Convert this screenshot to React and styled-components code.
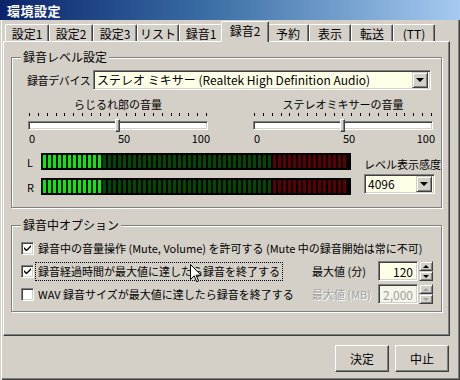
import React from 'react';
import styled, { createGlobalStyle } from 'styled-components';

const FONT = `"Noto Sans CJK JP", "Noto Sans", sans-serif`;

const GlobalStyle = createGlobalStyle`
  html, body {
    margin: 0;
    padding: 0;
    background: #d4d0c8;
  }
  body {
    font-family: ${FONT};
    font-size: 11px;
    color: #000;
  }
  * {
    box-sizing: border-box;
  }
`;

const TABS = [
  ['設定1', 44],
  ['設定2', 44],
  ['設定3', 44],
  ['リスト', 42],
  ['録音1', 44],
  ['録音2', 44, true],
  ['予約', 42],
  ['表示', 42],
  ['転送', 42],
  ['(TT)', 42],
];

const BAR_COUNT = 61;
const barTone = i => (i < 12 ? 'on' : i < 46 ? 'mid' : 'peak');

export default function App() {
  return (
    <>
      <GlobalStyle />
      <Window>
        <TitleBar>環境設定</TitleBar>
        <Body>
          <TabStrip>
            {TABS.map(([label, width, active]) => (
              <Tab key={label} $width={width} $active={active}>
                {label}
              </Tab>
            ))}
          </TabStrip>

          <Panel>
            <Group $height={158} $top={8}>
              <Legend>録音レベル設定</Legend>

              <DeviceRow>
                <DeviceLabel>録音デバイス</DeviceLabel>
                <Combo $width={338}>
                  <ComboText>ステレオ ミキサー (Realtek High Definition Audio)</ComboText>
                  <DropButton>
                    <DownArrow />
                  </DropButton>
                </Combo>
              </DeviceRow>

              <SliderRow>
                <Slider caption="らじるれ郎の音量" value={50} />
                <Slider caption="ステレオミキサーの音量" value={50} />
              </SliderRow>

              <MeterRow>
                <MeterColumn>
                  {['L', 'R'].map(ch => (
                    <MeterLine key={ch}>
                      <Channel>{ch}</Channel>
                      <Meter>
                        {Array.from({ length: BAR_COUNT }).map((_, i) => (
                          <Bar key={i} $tone={barTone(i)} />
                        ))}
                      </Meter>
                    </MeterLine>
                  ))}
                </MeterColumn>
                <SensitivityColumn>
                  <span>レベル表示感度</span>
                  <Combo $width={71}>
                    <ComboText>4096</ComboText>
                    <DropButton>
                      <DownArrow />
                    </DropButton>
                  </Combo>
                </SensitivityColumn>
              </MeterRow>
            </Group>

            <Group $height={94} $top={10}>
              <Legend>録音中オプション</Legend>
              <Options>
                <OptionRow>
                  <CheckBox checked />
                  <OptionText>
                    録音中の音量操作 (Mute, Volume) を許可する (Mute 中の録音開始は常に不可)
                  </OptionText>
                </OptionRow>
                <OptionRow>
                  <CheckBox checked />
                  <OptionText $focused>録音経過時間が最大値に達したら録音を終了する</OptionText>
                  <Limit>
                    <LimitLabel>最大値 (分)</LimitLabel>
                    <SpinField>120</SpinField>
                    <Spinner />
                  </Limit>
                </OptionRow>
                <OptionRow>
                  <CheckBox />
                  <OptionText>WAV 録音サイズが最大値に達したら録音を終了する</OptionText>
                  <Limit>
                    <LimitLabel $disabled>最大値 (MB)</LimitLabel>
                    <SpinField $disabled>2,000</SpinField>
                    <Spinner disabled />
                  </Limit>
                </OptionRow>
              </Options>
            </Group>
          </Panel>

          <ButtonRow>
            <PushButton>決定</PushButton>
            <PushButton>中止</PushButton>
          </ButtonRow>
        </Body>

        <Cursor viewBox="0 0 12 19" width="12" height="19">
          <path
            d="M0.5 0.5 L0.5 15.5 L4.2 11.8 L6.8 17.8 L8.6 17 L6.1 11.2 L11 11.2 Z"
            fill="#fff"
            stroke="#000"
            strokeWidth="1"
          />
        </Cursor>
      </Window>
    </>
  );
}

function Slider({ caption, value }) {
  return (
    <SliderBlock>
      <Caption>{caption}</Caption>
      <Ticks>
        {Array.from({ length: 21 }).map((_, i) => (
          <Tick key={i} />
        ))}
      </Ticks>
      <Track>
        <Thumb $pos={value} />
      </Track>
      <Scale>
        <span>0</span>
        <ScaleHalf>
          <span>50</span>
          <span>100</span>
        </ScaleHalf>
      </Scale>
    </SliderBlock>
  );
}

function CheckBox({ checked }) {
  return (
    <Box>
      {checked && (
        <svg width="7" height="7" viewBox="0 0 7 7">
          <path d="M0 2 L0 4 L2 6 L3 6 L7 2 L7 0 L2.5 4.5 Z" fill="#000" />
        </svg>
      )}
    </Box>
  );
}

function Spinner({ disabled }) {
  return (
    <SpinButtons>
      <SpinHalf>
        <SpinArrow $up $disabled={disabled} />
      </SpinHalf>
      <SpinHalf>
        <SpinArrow $disabled={disabled} />
      </SpinHalf>
    </SpinButtons>
  );
}

const raised = `
  background: #d4d0c8;
  border: 1px solid;
  border-color: #fff #404040 #404040 #fff;
  box-shadow: inset -1px -1px 0 #808080;
`;

const sunken = `
  border: 1px solid;
  border-color: #808080 #fff #fff #808080;
  box-shadow: inset 1px 1px 0 #404040, inset -1px -1px 0 #d4d0c8;
`;

const Window = styled.div`
  position: relative;
  width: 460px;
  height: 380px;
  overflow: hidden;
  background: #d4d0c8;
  display: flex;
  flex-direction: column;
  box-shadow: inset 1px 0 0 #d4d0c8, inset 2px 0 0 #fff, inset -1px -1px 0 #404040,
    inset -2px -2px 0 #808080;
`;

const TitleBar = styled.div`
  flex: none;
  height: 20px;
  padding-left: 7px;
  display: flex;
  align-items: center;
  background: linear-gradient(to right, #0a246a 0%, #3a6ea5 45%, #a6caf0 100%);
  color: #fff;
  font-weight: bold;
  font-size: 13px;
  letter-spacing: 0.5px;
`;

const Body = styled.div`
  padding: 1px 0 0 3px;
  display: flex;
  flex-direction: column;
`;

const TabStrip = styled.div`
  height: 20px;
  padding-left: 2px;
  display: flex;
  align-items: flex-end;
  font-size: 12px;
`;

const Tab = styled.div`
  position: relative;
  flex: none;
  width: ${p => p.$width + (p.$active ? 4 : 0)}px;
  height: ${p => (p.$active ? 21 : 17)}px;
  margin: ${p => (p.$active ? '0 -2px -1px' : '0')};
  z-index: ${p => (p.$active ? 1 : 0)};
  display: flex;
  align-items: center;
  justify-content: center;
  padding-bottom: ${p => (p.$active ? 3 : 0)}px;
  background: #d4d0c8;
  border-top: 1px solid #fff;
  border-left: 1px solid #fff;
  border-right: 1px solid #404040;
  border-radius: 2px 2px 0 0;
  box-shadow: inset -1px 0 0 #808080;
  white-space: nowrap;
`;

const Panel = styled.div`
  width: 447px;
  height: 295px;
  padding: 0 7px;
  border-top: 1px solid #fff;
  border-left: 1px solid #fff;
  border-right: 1px solid #404040;
  border-bottom: 1px solid #404040;
  box-shadow: inset -1px -1px 0 #808080;
`;

const Group = styled.fieldset`
  margin: ${p => p.$top}px 0 0;
  padding: 0;
  min-inline-size: 0;
  width: 431px;
  height: ${p => p.$height}px;
  border: 1px solid #808080;
  box-shadow: inset 1px 1px 0 #fff, 1px 1px 0 #fff;
`;

const Legend = styled.legend`
  margin-left: 9px;
  padding: 0 2px;
  line-height: 14px;
  font-size: 12px;
  background: #d4d0c8;
`;

const DeviceRow = styled.div`
  margin-top: 6px;
  padding-left: 15px;
  display: flex;
  align-items: center;
`;

const DeviceLabel = styled.span`
  width: 66px;
  flex: none;
  white-space: nowrap;
  letter-spacing: -0.4px;
`;

const Combo = styled.div`
  width: ${p => p.$width}px;
  height: 20px;
  flex: none;
  display: flex;
  align-items: center;
  justify-content: space-between;
  font-size: 12px;
  line-height: 16px;
  background: #ffffe8;
  ${sunken}
  padding: 0 2px 0 3px;
`;

const ComboText = styled.span`
  white-space: nowrap;
`;

const DropButton = styled.div`
  width: 16px;
  height: 16px;
  flex: none;
  display: flex;
  align-items: center;
  justify-content: center;
  ${raised}
  box-shadow: inset 1px 1px 0 #fff, inset -1px -1px 0 #808080;
  border-color: #d4d0c8 #404040 #404040 #d4d0c8;
`;

const DownArrow = styled.span`
  width: 0;
  height: 0;
  border-left: 4px solid transparent;
  border-right: 4px solid transparent;
  border-top: 4px solid #000;
`;

const SliderRow = styled.div`
  margin-top: 7px;
  padding-left: 16px;
  display: flex;
  gap: 43px;
`;

const SliderBlock = styled.div`
  width: 182px;
  display: flex;
  flex-direction: column;
`;

const Caption = styled.div`
  width: 180px;
  text-align: center;
  line-height: 14px;
  white-space: nowrap;
`;

const Ticks = styled.div`
  width: 180px;
  height: 4px;
  margin-top: 2px;
  padding: 0 1px;
  display: flex;
  justify-content: space-between;
`;

const Tick = styled.span`
  width: 1px;
  height: 3px;
  background: #000;
`;

const Track = styled.div`
  position: relative;
  width: 180px;
  height: 9px;
  margin-top: 4px;
  background: #fff;
  border-top: 1px solid #808080;
  border-left: 1px solid #808080;
  border-bottom: 1px solid #fff;
  border-right: 1px solid #fff;
  box-shadow: inset 1px 1px 0 #404040, inset -1px -1px 0 #d4d0c8;
`;

const Thumb = styled.span`
  position: absolute;
  left: calc(${p => p.$pos}% - 3px);
  top: -3px;
  width: 5px;
  height: 13px;
  ${raised}
`;

const Scale = styled.div`
  width: 182px;
  margin-top: 2px;
  line-height: 13px;
  display: grid;
  grid-template-columns: 89px 1fr;
  padding-left: 1px;
`;

const ScaleHalf = styled.div`
  display: flex;
  justify-content: space-between;
`;

const MeterRow = styled.div`
  margin-top: 8px;
  padding-left: 15px;
  display: flex;
  gap: 13px;
`;

const MeterColumn = styled.div`
  display: flex;
  flex-direction: column;
  gap: 8px;
`;

const MeterLine = styled.div`
  display: flex;
  align-items: center;
`;

const Channel = styled.span`
  width: 14px;
  flex: none;
  line-height: 14px;
`;

const Meter = styled.div`
  width: 310px;
  height: 17px;
  padding: 2px;
  display: flex;
  gap: 2px;
  background: #000;
`;

const BAR_COLORS = { on: '#00f000', mid: '#004a00', peak: '#5c0000' };

const Bar = styled.span`
  width: 3px;
  flex: none;
  background: ${p => BAR_COLORS[p.$tone]};
`;

const SensitivityColumn = styled.div`
  padding-top: 4px;
  display: flex;
  flex-direction: column;
  gap: 3px;
  line-height: 14px;
  white-space: nowrap;
`;

const Options = styled.div`
  padding: 6px 8px 0 9px;
  display: flex;
  flex-direction: column;
  gap: 3px;
`;

const OptionRow = styled.div`
  height: 20px;
  display: flex;
  align-items: center;
`;

const Box = styled.span`
  width: 13px;
  height: 13px;
  flex: none;
  display: flex;
  align-items: center;
  justify-content: center;
  background: #fff;
  ${sunken}
`;

const OptionText = styled.span`
  margin-left: 1px;
  padding: 0 2px;
  line-height: 17px;
  border: 1px dotted ${p => (p.$focused ? '#000' : 'transparent')};
  white-space: nowrap;
`;

const Limit = styled.div`
  margin-left: auto;
  display: flex;
  align-items: center;
`;

const LimitLabel = styled.span`
  width: 66px;
  flex: none;
  white-space: nowrap;
  color: ${p => (p.$disabled ? '#a0a0a0' : '#000')};
  text-shadow: ${p => (p.$disabled ? '1px 1px 0 #fff' : 'none')};
`;

const SpinField = styled.div`
  width: 40px;
  height: 20px;
  padding-right: 4px;
  display: flex;
  align-items: center;
  justify-content: flex-end;
  font-size: 12px;
  background: ${p => (p.$disabled ? '#f6f5ea' : '#ffffe8')};
  color: ${p => (p.$disabled ? '#a0a0a0' : '#000')};
  ${sunken}
`;

const SpinButtons = styled.div`
  width: 14px;
  height: 20px;
  margin-left: 1px;
  display: flex;
  flex-direction: column;
`;

const SpinHalf = styled.div`
  flex: 1;
  display: flex;
  align-items: center;
  justify-content: center;
  ${raised}
  border-color: #d4d0c8 #404040 #404040 #d4d0c8;
  box-shadow: inset 1px 1px 0 #fff, inset -1px -1px 0 #808080;
`;

const SpinArrow = styled.span`
  width: 0;
  height: 0;
  border-left: 3px solid transparent;
  border-right: 3px solid transparent;
  ${p =>
    p.$up
      ? `border-bottom: 3px solid ${p.$disabled ? '#a0a0a0' : '#000'};`
      : `border-top: 3px solid ${p.$disabled ? '#a0a0a0' : '#000'};`}
`;

const ButtonRow = styled.div`
  width: 447px;
  margin-top: 9px;
  padding-right: 1px;
  display: flex;
  justify-content: flex-end;
  gap: 6px;
  font-size: 12px;
`;

const PushButton = styled.div`
  width: 54px;
  height: 27px;
  display: flex;
  align-items: center;
  justify-content: center;
  ${raised}
`;

const Cursor = styled.svg`
  position: absolute;
  left: 190px;
  top: 264px;
  pointer-events: none;
`;
